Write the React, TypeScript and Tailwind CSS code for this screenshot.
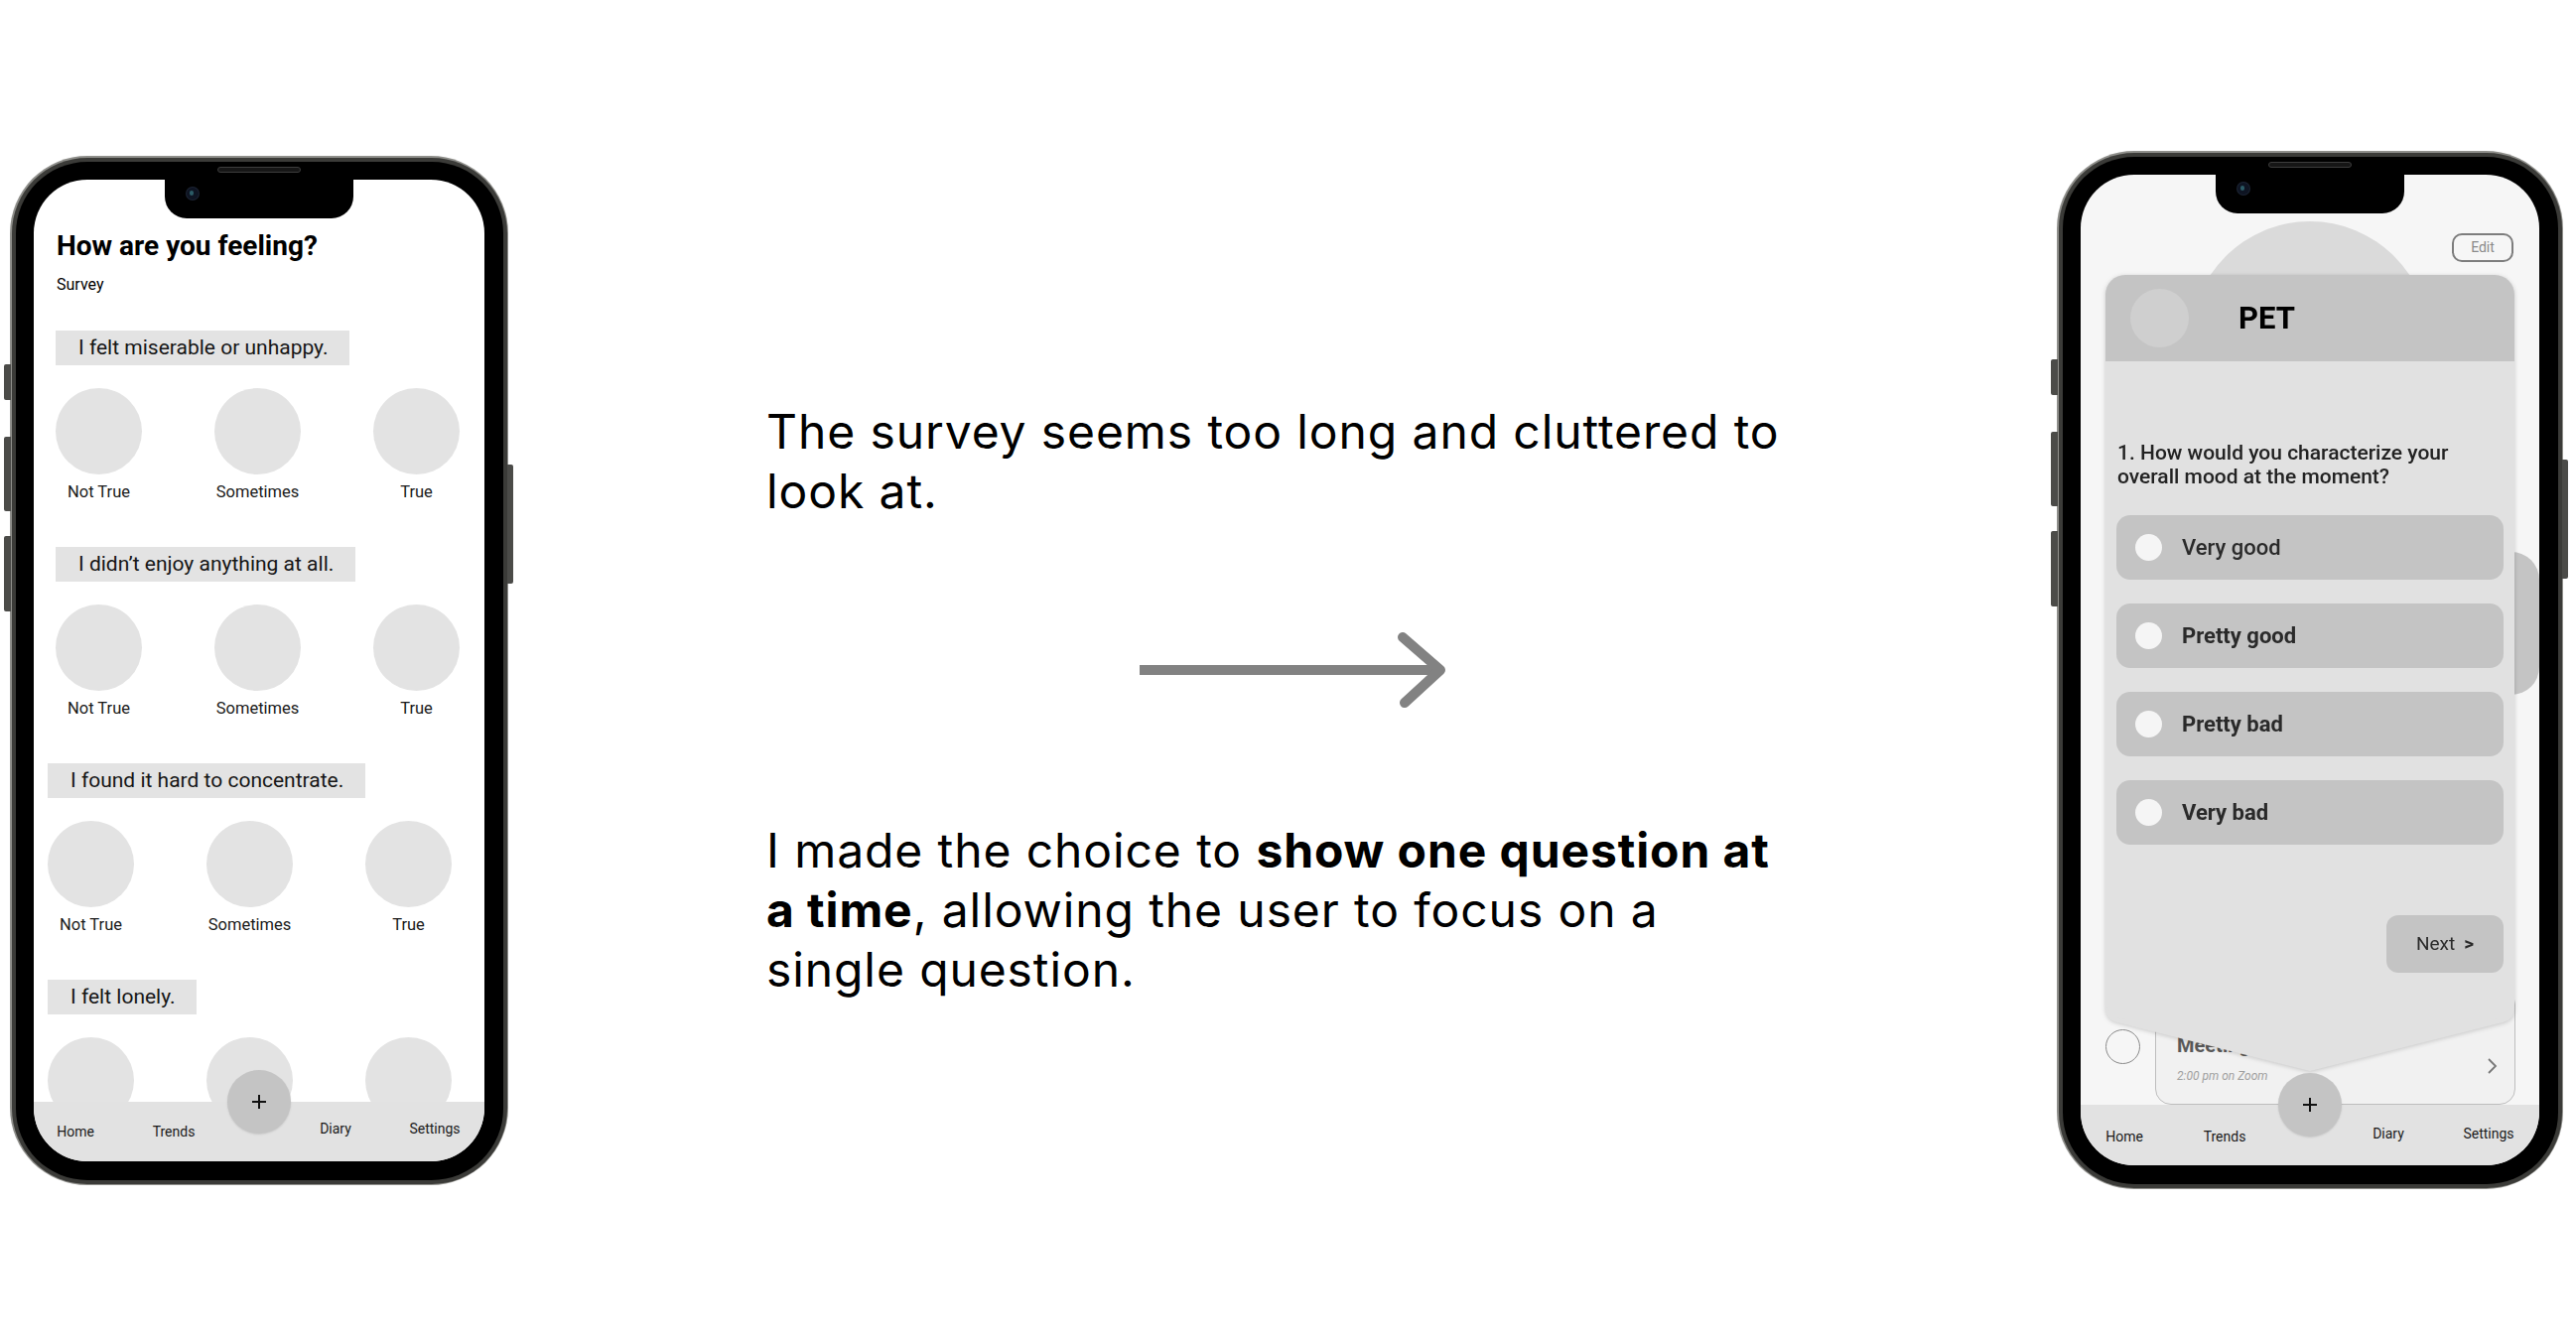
import React from 'react';

const roboto = 'font-[family-name:Roboto,sans-serif]';

type PhoneProps = {
    size: string;
    screenBg: string;
    children: React.ReactNode;
};

const Phone = ({ size, screenBg, children }: PhoneProps) => {
    return (
        <div className={`relative shrink-0 ${size}`}>
            {/* side buttons */}
            <div className="absolute left-[-6px] top-[210px] h-[36px] w-[7px] rounded-l-[2px] bg-[#4b4b48]" />
            <div className="absolute left-[-6px] top-[283px] h-[75px] w-[7px] rounded-l-[2px] bg-[#4b4b48]" />
            <div className="absolute left-[-6px] top-[383px] h-[76px] w-[7px] rounded-l-[2px] bg-[#4b4b48]" />
            <div className="absolute right-[-5px] top-[311px] h-[120px] w-[6px] rounded-r-[2px] bg-[#4b4b48]" />

            <div className="h-full w-full rounded-[78px] bg-[#8f8f8b] p-[1.5px]">
                <div className="h-full w-full rounded-[76px] bg-[#3b3b38] p-[4px]">
                    <div className="h-full w-full rounded-[72px] bg-black p-[18.5px]">
                        <div className={`relative h-full w-full overflow-hidden rounded-[54px] ${screenBg}`}>
                            {children}
                            {/* notch */}
                            <div className="absolute left-1/2 top-0 h-[39px] w-[190px] -translate-x-1/2 rounded-b-[22px] bg-black">
                                <div className="absolute left-[22px] top-[8px] h-[12px] w-[12px] rounded-full bg-[#0e1422] ring-1 ring-[#1c2433]">
                                    <div className="ml-[3px] mt-[3px] h-[5px] w-[4px] rounded-full bg-[#2b5b66]" />
                                </div>
                            </div>
                        </div>
                    </div>
                </div>
            </div>
            {/* speaker */}
            <div className="absolute left-1/2 top-[11px] h-[6px] w-[84px] -translate-x-1/2 rounded-full border border-[#3c3c3c] bg-[#161616]" />
        </div>
    );
};

const NavPlus = () => (
    <div className="flex h-[64px] w-[64px] items-center justify-center rounded-full bg-[#c4c4c4] shadow-[0_1px_2px_rgba(0,0,0,0.12)]">
        <svg width="16" height="16" viewBox="0 0 16 16">
            <path d="M8 1v14M1 8h14" stroke="#111" strokeWidth="2" />
        </svg>
    </div>
);

type SectionProps = {
    text: string;
    boxW: string;
    shift?: boolean;
    first?: boolean;
    noLabels?: boolean;
};

const Section = ({ text, boxW, shift, first, noLabels }: SectionProps) => {
    return (
        <div className={`flex flex-col ${first ? 'mt-[36px]' : 'mt-[45px]'} ${shift ? '-ml-[8px]' : ''}`}>
            <div className={`h-[35px] bg-[#e3e3e3] pl-[23px] text-[21px] leading-[35px] text-[#161616] ${boxW}`}>
                {text}
            </div>
            <div className="mt-[23px] flex gap-[73px]">
                {['Not True', 'Sometimes', 'True'].map((label) => (
                    <div key={label} className="flex w-[87px] flex-col items-center">
                        <div className="h-[87px] w-[87px] rounded-full bg-[#e3e3e3]" />
                        {!noLabels && (
                            <span className="mt-[8px] whitespace-nowrap text-[16.5px] leading-[20px] text-[#1a1a1a]">
                                {label}
                            </span>
                        )}
                    </div>
                ))}
            </div>
        </div>
    );
};

const SurveyScreen = () => {
    return (
        <div className={`relative h-full w-full ${roboto}`}>
            <div className="flex flex-col pl-[22px] pt-[50px]">
                <h1 className="ml-[1px] text-[28px] font-bold leading-[34px] text-black">How are you feeling?</h1>
                <p className="ml-[1px] mt-[12px] text-[16px] leading-[20px] text-black">Survey</p>
                <Section first text="I felt miserable or unhappy." boxW="w-[296px]" />
                <Section text="I didn’t enjoy anything at all." boxW="w-[302px]" />
                <Section shift text="I found it hard to concentrate." boxW="w-[320px]" />
                <Section shift noLabels text="I felt lonely." boxW="w-[150px]" />
            </div>

            {/* tab bar */}
            <div className="absolute bottom-0 left-0 flex h-[60px] w-full items-start bg-[#e2e2e2] text-[14px] leading-[16px] text-[#1a1a1a]">
                <span className="ml-[12px] mt-[22px] w-[60px] text-center">Home</span>
                <span className="ml-[39px] mt-[22px] w-[60px] text-center">Trends</span>
                <span className="ml-[103px] mt-[19px] w-[60px] text-center">Diary</span>
                <span className="ml-[40px] mt-[19px] w-[60px] text-center">Settings</span>
                <div className="absolute left-1/2 top-[-32px] -translate-x-1/2">
                    <NavPlus />
                </div>
            </div>
        </div>
    );
};

const PetScreen = () => {
    const options = [
        { label: 'Very good', weight: 'font-medium' },
        { label: 'Pretty good', weight: 'font-bold' },
        { label: 'Pretty bad', weight: 'font-bold' },
        { label: 'Very bad', weight: 'font-bold' },
    ];

    return (
        <div className={`relative h-full w-full ${roboto}`}>
            {/* background home screen */}
            <div className="flex flex-col">
                <div className="mx-auto mt-[47px] h-[240px] w-[240px] rounded-full bg-[#dadada]" />
                <div className="mt-[93px] h-[144px] w-[60px] self-end rounded-r-[28px] bg-[#c4c4c4]" />
                <div className="mt-[296px] flex items-center">
                    <div className="ml-[25px] h-[35px] w-[35px] rounded-full border border-[#8a8a8a]" />
                    <div className="ml-[15px] flex h-[117px] w-[363px] items-start rounded-[16px] border border-[#bdbdbd] bg-[#f1f1f1]">
                        <div className="flex flex-1 flex-col pl-[21px] pt-[44px]">
                            <span className="text-[20px] font-bold leading-[24px] text-[#5a5a5a]">Meeting</span>
                            <span className="mt-[12px] text-[12px] italic leading-[14px] text-[#a0a0a0]">2:00 pm on Zoom</span>
                        </div>
                        <svg className="mr-[17px] mt-[68px]" width="11" height="18" viewBox="0 0 11 18">
                            <path d="M2 2l7 7-7 7" fill="none" stroke="#777" strokeWidth="1.8" />
                        </svg>
                    </div>
                </div>
            </div>

            <div className="absolute left-[374px] top-[59px] flex h-[29px] w-[62px] items-center justify-center rounded-[10px] border-2 border-[#7d7d7d] text-[14px] text-[#8a8a8a]">
                Edit
            </div>

            {/* survey card overlay */}
            <div className="absolute left-[25px] top-[101px] h-[750px] w-[412px] drop-shadow-[0_1px_2px_rgba(0,0,0,0.18)]">
                <svg className="absolute left-0 top-[720px]" width="412" height="90" viewBox="0 0 412 90">
                    <path d="M0 0H412V18Q412 30 400 33L206 82L12 33Q0 30 0 18Z" fill="#e1e1e1" />
                </svg>
                <div className="relative flex h-full w-full flex-col rounded-[20px] bg-[#e1e1e1]">
                    <div className="flex h-[87px] shrink-0 items-center rounded-t-[20px] bg-[#c4c4c4] pl-[25px]">
                        <div className="h-[59px] w-[59px] rounded-full bg-[#cfcfcf]" />
                        <span className="ml-[50px] text-[31px] font-bold leading-[36px] text-black">PET</span>
                    </div>
                    <div className="flex flex-col px-[11px]">
                        <p className="ml-[1px] mt-[80px] text-[21px] font-medium leading-[24px] text-[#222]">
                            1. How would you characterize your
                            <br />
                            overall mood at the moment?
                        </p>
                        <div className="mt-[27px] flex flex-col gap-[24px]">
                            {options.map((o) => (
                                <div key={o.label} className="flex h-[65px] items-center rounded-[14px] bg-[#c4c4c4] pl-[19px]">
                                    <div className="h-[27px] w-[27px] rounded-full bg-[#f5f5f5]" />
                                    <span className={`ml-[20px] text-[22px] text-[#2a2a2a] ${o.weight}`}>{o.label}</span>
                                </div>
                            ))}
                        </div>
                        <div className="mt-[71px] flex h-[58px] w-[118px] items-center justify-center self-end rounded-[12px] bg-[#c4c4c4] text-[19px] text-[#2a2a2a]">
                            <span>Next</span>
                            <span className="ml-[9px] font-bold">&gt;</span>
                        </div>
                    </div>
                </div>
            </div>

            {/* tab bar */}
            <div className="absolute bottom-0 left-0 flex h-[61px] w-full items-start bg-[#e2e2e2] text-[14px] leading-[16px] text-[#1a1a1a]">
                <span className="ml-[14px] mt-[24px] w-[60px] text-center">Home</span>
                <span className="ml-[41px] mt-[24px] w-[60px] text-center">Trends</span>
                <span className="ml-[105px] mt-[21px] w-[60px] text-center">Diary</span>
                <span className="ml-[41px] mt-[21px] w-[60px] text-center">Settings</span>
                <div className="absolute left-1/2 top-[-32px] -translate-x-1/2">
                    <NavPlus />
                </div>
            </div>
        </div>
    );
};

export default function App() {
    return (
        <div className="flex h-[1350px] w-[2595px] items-start overflow-hidden bg-white">
            <div className="ml-[10px] mt-[157px]">
                <Phone size="h-[1037px] w-[502px]" screenBg="bg-white">
                    <SurveyScreen />
                </Phone>
            </div>

            <div className="ml-[260px] mt-[405px] flex w-[1080px] flex-col font-[family-name:Inter,sans-serif] text-[48px] leading-[60px] tracking-[0.9px] text-black">
                <p className="whitespace-nowrap">
                    The survey seems too long and cluttered to
                    <br />
                    look at.
                </p>
                <svg className="ml-[368px] mt-[111px]" width="320" height="80" viewBox="0 0 320 80">
                    <path d="M8 39H306" stroke="#828282" strokeWidth="10" />
                    <path d="M273 6L311 39L275 72" fill="none" stroke="#828282" strokeWidth="10" strokeLinecap="round" strokeLinejoin="round" />
                </svg>
                <p className="mt-[111px] whitespace-nowrap">
                    I made the choice to <b className="font-bold">show one question at</b>
                    <br />
                    <b className="font-bold">a time</b>, allowing the user to focus on a
                    <br />
                    single question.
                </p>
            </div>

            <div className="ml-auto mr-[13px] mt-[152px]">
                <Phone size="h-[1046px] w-[510px]" screenBg="bg-[#f6f6f6]">
                    <PetScreen />
                </Phone>
            </div>
        </div>
    );
}
